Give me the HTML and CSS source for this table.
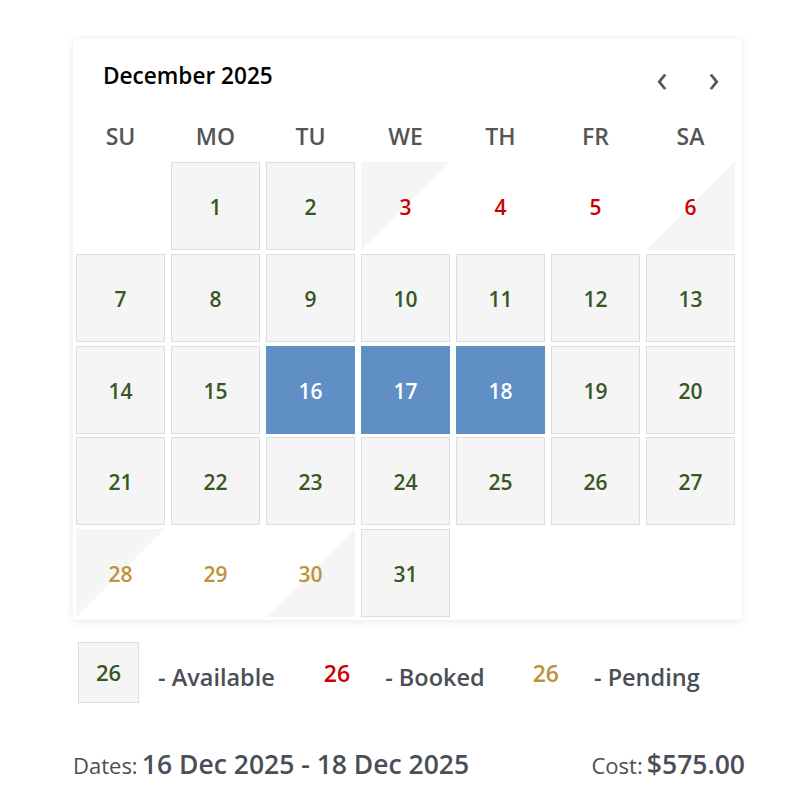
FILE: index.html
```html
<!DOCTYPE html>
<html lang="en">
<head>
<meta charset="utf-8">
<title>Booking calendar</title>
<link rel="stylesheet" href="styles.css">
</head>
<body>
<div class="page">
  <div class="card">
    <div class="cal-head">
      <div class="month">December 2025</div>
      <div class="nav">
        <span class="nav-btn">&#8249;</span>
        <span class="nav-btn">&#8250;</span>
      </div>
    </div>
    <div class="weekdays">
      <div>SU</div><div>MO</div><div>TU</div><div>WE</div><div>TH</div><div>FR</div><div>SA</div>
    </div>
    <div class="grid">
      <div class="day empty"></div>
      <div class="day avail">1</div>
      <div class="day avail">2</div>
      <div class="day booked split-start">3</div>
      <div class="day booked plain">4</div>
      <div class="day booked plain">5</div>
      <div class="day booked split-end">6</div>

      <div class="day avail">7</div>
      <div class="day avail">8</div>
      <div class="day avail">9</div>
      <div class="day avail">10</div>
      <div class="day avail">11</div>
      <div class="day avail">12</div>
      <div class="day avail">13</div>

      <div class="day avail">14</div>
      <div class="day avail">15</div>
      <div class="day selected">16</div>
      <div class="day selected">17</div>
      <div class="day selected">18</div>
      <div class="day avail">19</div>
      <div class="day avail">20</div>

      <div class="day avail">21</div>
      <div class="day avail">22</div>
      <div class="day avail">23</div>
      <div class="day avail">24</div>
      <div class="day avail">25</div>
      <div class="day avail">26</div>
      <div class="day avail">27</div>

      <div class="day pending split-start">28</div>
      <div class="day pending plain">29</div>
      <div class="day pending split-end">30</div>
      <div class="day avail">31</div>
    </div>
  </div>

  <div class="legend">
    <div class="legend-item">
      <span class="legend-box avail-text">26</span>
      <span class="legend-label">- Available</span>
    </div>
    <div class="legend-item">
      <span class="legend-num booked-text">26</span>
      <span class="legend-label">- Booked</span>
    </div>
    <div class="legend-item">
      <span class="legend-num pending-text">26</span>
      <span class="legend-label">- Pending</span>
    </div>
  </div>

  <div class="summary">
    <div class="summary-item"><span class="summary-key">Dates:</span> <span class="summary-val">16 Dec 2025 - 18 Dec 2025</span></div>
    <div class="summary-item"><span class="summary-key">Cost:</span> <span class="summary-val">$575.00</span></div>
  </div>
</div>
</body>
</html>
```

FILE: styles.css
```css
* { box-sizing: border-box; }

body {
  margin: 0;
  background: #ffffff;
  font-family: "Open Sans", "Noto Sans", sans-serif;
}

.page {
  padding: 39px 0 0 73px;
  width: 800px;
}

.card {
  width: 669px;
  background: #ffffff;
  border-radius: 4px;
  box-shadow: 0 1px 8px rgba(0, 0, 0, 0.10);
  padding: 0 7px 3px 3px;
}

.cal-head {
  height: 72px;
  display: flex;
  align-items: center;
  justify-content: space-between;
  padding: 0 10px 0 27px;
}

.month {
  font-size: 22.6px;
  font-weight: 600;
  color: #000000;
}

.nav {
  display: flex;
  gap: 30px;
  padding-top: 3px;
}

.nav-btn {
  font-size: 38px;
  line-height: 20px;
  color: #555555;
  font-weight: 500;
  width: 22px;
  text-align: center;
}

.weekdays {
  display: grid;
  grid-template-columns: repeat(7, 89px);
  column-gap: 6px;
  height: 51px;
  align-items: center;
  font-size: 23px;
  font-weight: 600;
  color: #555555;
  text-align: center;
  padding-bottom: 1px;
}

.grid {
  display: grid;
  grid-template-columns: repeat(7, 89px);
  grid-auto-rows: 88px;
  column-gap: 6px;
  row-gap: 3.75px;
}

.day {
  display: flex;
  align-items: center;
  justify-content: center;
  font-size: 21px;
  font-weight: 600;
  padding-top: 2px;
}

.avail {
  background: #f5f5f5;
  border: 1px solid #dddddd;
  color: #385723;
}

.booked { color: #cc0000; }
.pending { color: #bf9139; }

.plain { background: #ffffff; }

.split-start {
  background: linear-gradient(to bottom right, #f5f5f5 50%, #ffffff 50%);
}

.split-end {
  background: linear-gradient(to bottom right, #ffffff 50%, #f5f5f5 50%);
}

.selected {
  background: #608fc6;
  color: #ffffff;
}

.legend {
  display: flex;
  align-items: center;
  margin-top: 22px;
  padding-left: 5px;
}

.legend-item {
  display: flex;
  align-items: center;
}

.legend-box {
  width: 61px;
  height: 61px;
  background: #f5f5f5;
  border: 1px solid #dddddd;
  display: flex;
  align-items: center;
  justify-content: center;
  font-size: 22px;
  font-weight: 600;
  padding-bottom: 2px;
}

.legend-num {
  font-size: 23px;
  font-weight: 600;
  padding-bottom: 0;
}

.legend-item:nth-child(2) { margin-left: 49px; }
.legend-item:nth-child(3) { margin-left: 48px; }

.legend-label {
  font-size: 23.5px;
  font-weight: 600;
  color: #4a4f57;
  margin-left: 19px;
  padding-top: 9px;
}

.legend-num + .legend-label { margin-left: 35px; }

.avail-text { color: #385723; }
.booked-text { color: #cc0000; }
.pending-text { color: #bf9139; }

.summary {
  display: flex;
  justify-content: space-between;
  align-items: baseline;
  width: 672px;
  margin-top: 43px;
  color: #4a4f57;
}

.summary-key {
  font-size: 22px;
  font-weight: 400;
}

.summary-val {
  font-size: 26.5px;
  font-weight: 600;
}
```
